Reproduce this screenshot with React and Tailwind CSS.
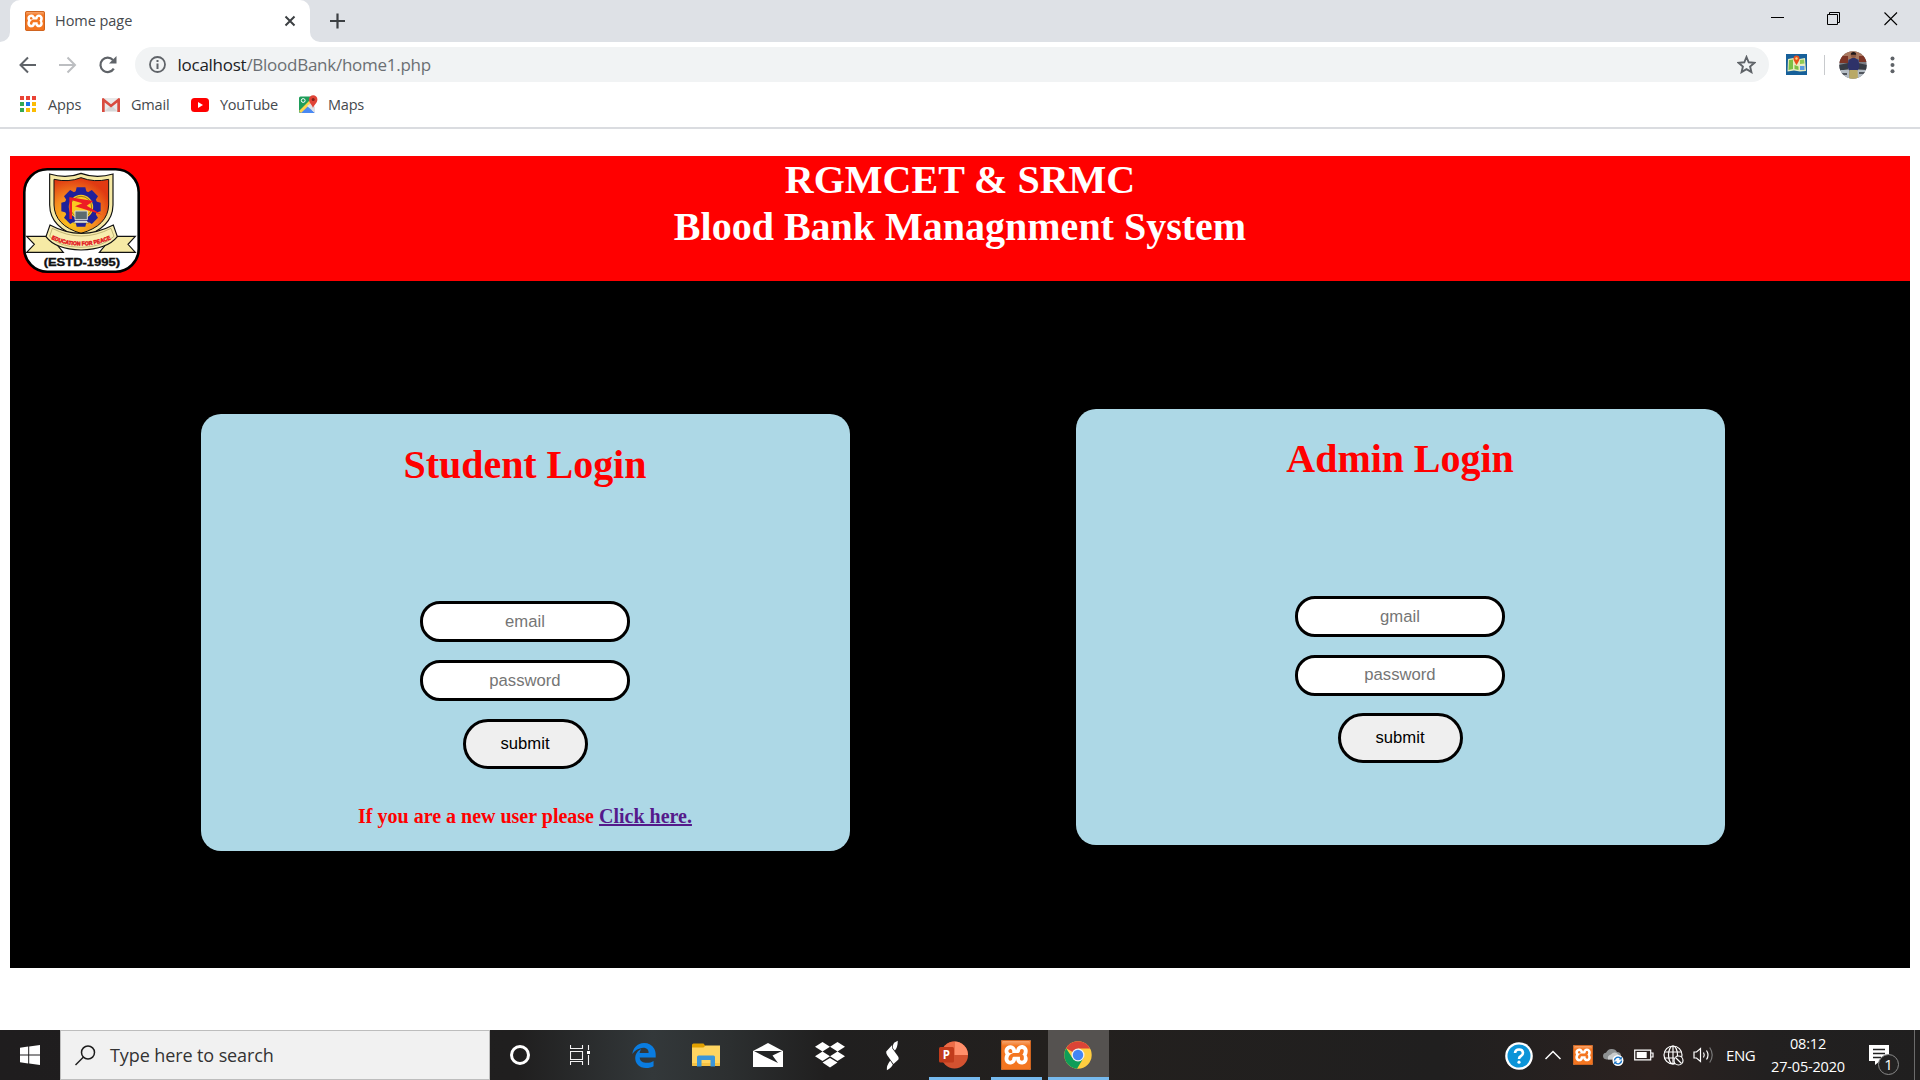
import { SiXampp } from "react-icons/si";
import { FaEdgeLegacy } from "react-icons/fa";

const UI = "font-['Open_Sans','Noto_Sans',sans-serif]";

function Xampp({ className }) {
  return (
    <span className={`relative block shrink-0 overflow-hidden rounded-[2px] bg-white ${className}`}>
      <SiXampp className="block h-full w-full scale-[1.06] text-[#f47621]" />
      <span className="absolute inset-0 rounded-[2px] border border-[#cf6420] bg-[linear-gradient(180deg,rgba(255,255,255,.35),transparent_18%)]" />
    </span>
  );
}

function TabStrip() {
  return (
    <div className="flex h-[42px] items-start bg-[#dee1e6]">
      <svg className="mt-[32px] h-[10px] w-[10px]" viewBox="0 0 10 10"><path d="M10 0v10H0A10 10 0 0 0 10 0z" fill="#fff" /></svg>
      <div className="flex h-[42px] w-[300px] items-center rounded-t-[10px] bg-white pl-[15px]">
        <Xampp className="h-5 w-5" />
        <span className="ml-[10px] w-[229px] text-[14.5px] leading-5 tracking-[-0.05px] text-[#45494d]">Home page</span>
        <svg className="h-3 w-3 shrink-0" viewBox="0 0 12 12"><path d="M1.500 1.500l9 9M10.500 1.500l-9 9" stroke="#3c4043" strokeWidth="2" /></svg>
      </div>
      <svg className="mt-[32px] h-[10px] w-[10px]" viewBox="0 0 10 10"><path d="M0 0v10h10A10 10 0 0 1 0 0z" fill="#fff" /></svg>
      <svg className="ml-[9px] mt-[13px] h-4 w-4" viewBox="0 0 16 16"><path d="M8.500 .5v15M1 8h15" stroke="#3c4043" strokeWidth="2.200" /></svg>
      <div className="ml-auto flex pt-3">
        <svg className="h-[14px] w-[14px]" viewBox="0 0 14 14"><path d="M0 5.500h13" stroke="#000" /></svg>
        <svg className="ml-[42px] h-[14px] w-[14px]" viewBox="0 0 14 14" fill="none" stroke="#000"><path d="M.5 2.500h10v10H.5zM2.500 2V.5h10v10H11" /></svg>
        <svg className="ml-[43px] mr-[22px] h-[14px] w-[14px]" viewBox="0 0 14 14"><path d="M.5 .5l12.500 12.500M13 .5L.5 13" stroke="#000" strokeWidth="1.100" /></svg>
      </div>
    </div>
  );
}

function Toolbar() {
  return (
    <div className="flex h-[45px] items-center">
      <svg className="ml-[19px] h-[18px] w-[18px]" viewBox="0 0 18 18" fill="none" stroke="#5f6368" strokeWidth="2"><path d="M17 9H2M9 1.500L1.500 9 9 16.500" /></svg>
      <svg className="ml-[22px] h-[18px] w-[18px]" viewBox="0 0 18 18" fill="none" stroke="#bcbec1" strokeWidth="2"><path d="M0 9h15.500M8.500 1.500L16 9l-7.500 7.500" /></svg>
      <svg className="ml-[22px] h-[18px] w-[18px]" viewBox="0 0 18 18"><path d="M14.800 12.600A7.200 7.200 0 1 1 14 4" fill="none" stroke="#5f6368" strokeWidth="2.200" /><path d="M17.500 0v7.500H10z" fill="#5f6368" /></svg>
      <div className="ml-[18px] flex h-[35px] w-[1634px] items-center rounded-full bg-[#f1f3f4] pl-[14px]">
        <svg className="h-[17px] w-[17px]" viewBox="0 0 17 17"><circle cx="8.500" cy="8.500" r="7.500" fill="none" stroke="#5f6368" strokeWidth="1.800" /><path d="M7.500 7.500h2V13h-2zM7.500 4h2v2h-2z" fill="#5f6368" /></svg>
        <span className="ml-[11.500px] text-[17px] leading-6 tracking-[-0.26px] text-[#6b6f73]"><span className="text-[#202124]">localhost</span>/BloodBank/home1.php</span>
        <svg className="ml-auto mr-[13px] h-[19px] w-[19px]" viewBox="0 0 19 19" fill="none" stroke="#5f6368" strokeWidth="1.900"><path d="M9.500 2l2.200 5.300 5.700.5-4.300 3.700 1.300 5.600-4.900-3-4.900 3 1.300-5.600L1.600 7.800l5.700-.5z" /></svg>
      </div>
      <svg className="ml-[17px] h-[21px] w-[21px]" viewBox="0 0 21 21">
        <path d="M0 0h21v21H0z" fill="#17609a" />
        <path d="M2 5l5.500-1 6 1L19 4l1 13-6 .5-6-1-6.500 1z" fill="#e8ecc0" />
        <path d="M3 6l4-.5V15l-4.500 1zM8.500 11l4 1.500V16l-4-1z" fill="#7cc047" />
        <path d="M14 6l4-.5.5 4-4.500.5z" fill="#8fcb54" /><path d="M14 12h4.500v4H14z" fill="#5a9be0" />
        <path d="M10.500 11C8 7 7.500 6 7.500 4.500a3 3 0 0 1 6 0c0 1.500-.5 2.500-3 6.500z" fill="#e8501c" /><circle cx="10.500" cy="4.500" r="1.200" fill="#ffd27a" />
      </svg>
      <div className="ml-[17px] h-5 w-px bg-[#c8cacd]" />
      <svg className="ml-[14px] h-[28px] w-[28px]" viewBox="0 0 28 28">
        <clipPath id="av"><circle cx="14" cy="14" r="13.700" /></clipPath>
        <g clipPath="url(#av)">
          <path d="M0 0h28v28H0z" fill="#7c7d84" /><path d="M0 0h28v8H0z" fill="#a9785f" /><path d="M0 5h9v7H0zM20 5h8v6h-8z" fill="#7d3526" />
          <path d="M0 14l9-2v6l-9 2zM19 12l9 2v5l-9-1z" fill="#373b43" /><path d="M0 19h10v9H0zM18 19h10v9H18z" fill="#b4bcc4" /><path d="M2 22h6v2H2zM20 21h6v2h-6z" fill="#50555d" />
          <path d="M9.500 9l3.500-2h3l3.500 2 1 7-2 3.500h-8l-2-3.500z" fill="#2e3269" /><circle cx="14.500" cy="4.300" r="2.600" fill="#8d5a44" /><path d="M11.800 3.800a2.700 2.700 0 0 1 5.400 0z" fill="#20191b" />
          <path d="M10.500 19h8l.5 9h-9z" fill="#b9a967" />
        </g>
      </svg>
      <svg className="ml-[23px] h-[18px] w-[6px]" viewBox="0 0 6 18" fill="#5f6368"><circle cx="2.500" cy="2.500" r="2" /><circle cx="2.500" cy="9" r="2" /><circle cx="2.500" cy="15.300" r="2" /></svg>
    </div>
  );
}

const APP_DOTS = ["#ea4335", "#ea4335", "#ea4335", "#34a853", "#1a73e8", "#fbbc04", "#34a853", "#fbbc04", "#fbbc04"];

function Bookmarks() {
  const label = "text-[14.5px] leading-5 text-[#45494d]";
  return (
    <div className="flex h-[40px] items-start pt-[8px]">
      <div className="ml-5 mt-[1px] grid h-[16px] w-[16px] grid-cols-3 gap-[2px]">
        {APP_DOTS.map((c, i) => <span key={i} className="h-1 w-1" style={{ background: c }} />)}
      </div>
      <span className={`ml-[12px] w-[54px] tracking-[-0.15px] ${label}`}>Apps</span>
      <svg className="mt-[3px] h-[14px] w-[18px]" viewBox="0 0 18 14"><path d="M1 0h16v14H1z" fill="#e9e9e9" /><path d="M3 13l6-6 6 6z" fill="#d6d6d6" /><path d="M0 1.200C0 .4.600 0 1.300 0L9 6.200 16.700 0c.7 0 1.300.4 1.300 1.200V14h-2.700V4.500L9 9.400 2.700 4.500V14H0z" fill="#d94b3f" /></svg>
      <span className={`ml-[11px] w-[60px] tracking-[-0.2px] ${label}`}>Gmail</span>
      <svg className="mt-[3px] h-[14px] w-[18px]" viewBox="0 0 18 14"><rect width="18" height="14" rx="3.500" fill="#f00" /><path d="M7 4l5 3-5 3z" fill="#fff" /></svg>
      <span className={`ml-[11px] w-[79px] tracking-[-0.25px] ${label}`}>YouTube</span>
      <svg className="h-[19px] w-[19px]" viewBox="0 0 19 19">
        <path d="M0 3q0-1.500 1.500-1.500H13V18H1.500Q0 18 0 16.500z" fill="#1f9d5a" /><path d="M1 18L8 10.500l8 7.500z" fill="#4a89f3" /><path d="M0 16L12 4l2.500 2L2 18z" fill="#ffd44a" /><path d="M8 11l4-3 4 4v6z" fill="#dfe1e5" /><circle cx="4.200" cy="5.500" r="1.900" fill="none" stroke="#fff" />
        <path d="M14 13c-.5-3-4-5-4-8.500a4.200 4.200 0 0 1 8.400 0C18.400 8 14.700 10 14 13z" fill="#e04336" /><circle cx="14.200" cy="4.500" r="1.500" fill="#84211a" />
      </svg>
      <span className={`ml-[10px] tracking-[-0.2px] ${label}`}>Maps</span>
    </div>
  );
}

const GEAR_TEETH = [0, 45, 90, 135, 180, 225, 270, 315];

function Crest() {
  return (
    <svg className="h-full w-full" viewBox="0 0 117 105">
      <defs>
        <radialGradient id="sh" cx=".35" cy=".75" r=".75"><stop offset="0" stopColor="#fbd21c" /><stop offset=".55" stopColor="#f58a1f" /><stop offset="1" stopColor="#e03a12" /></radialGradient>
        <path id="motto" d="M94 222Q183 262 276 221" />
      </defs>
      <rect x="1.300" y="1.300" width="114.400" height="102.400" rx="23" fill="#fff" stroke="#000" strokeWidth="2.600" />
      <g transform="translate(-3 -3) scale(.33333)">
        <path d="M89 27Q140 42 183 25Q228 42 279 27V120Q278 190 183 217Q90 190 89 120z" fill="#f6e9a4" stroke="#111" strokeWidth="3.500" />
        <path d="M102 43Q146 53 183 38Q222 53 266 43V120Q264 182 183 205Q104 182 102 120z" fill="url(#sh)" stroke="#111" strokeWidth="3" />
        {GEAR_TEETH.map((a) => <path key={a} d="M170 67h26l4 16h-34z" fill="#20209a" transform={`rotate(${a} 183 126)`} />)}
        <circle cx="183" cy="126" r="43" fill="#fbc921" stroke="#20209a" strokeWidth="13" />
        <circle cx="183" cy="126" r="32" fill="none" stroke="#6b5310" strokeWidth="2" />
        <path d="M151 97L220 108 200 122 246 149 165 124 187 115 156 106V162H148V97z" fill="#ed1c24" />
        <path d="M165 138h37v26h-37z" fill="#5b6b70" stroke="#d9dcda" strokeWidth="3" /><path d="M160 174l6-7h34l7 7z" fill="#e5e5e5" stroke="#555" strokeWidth="1.500" />
        <path d="M20 214H90L130 262H20L43 238zM346 214H278L238 262H346L324 238z" fill="#f6eaa5" stroke="#111" strokeWidth="3.500" />
        <path d="M90 180Q183 230 280 180L292 215Q262 253 183 255Q106 253 78 215z" fill="#f8edae" stroke="#111" strokeWidth="3.500" />
        <path d="M97 190Q183 236 273 190L282 214Q250 246 183 247Q116 246 89 214z" fill="none" stroke="#8a7b3a" strokeWidth="1.500" />
        <text fill="#e31b23" stroke="#e31b23" strokeWidth="1.500" fontSize="17" fontWeight="700" fontFamily="Liberation Sans, sans-serif"><textPath href="#motto" textLength="184" lengthAdjust="spacingAndGlyphs">EDUCATION FOR PEACE</textPath></text>
        <text x="71" y="302" textLength="229" lengthAdjust="spacingAndGlyphs" fontSize="30" fontWeight="700" fontFamily="Liberation Sans, sans-serif" fill="#111" stroke="#111" strokeWidth="1">(ESTD-1995)</text>
      </g>
    </svg>
  );
}

function LoginCard({ title, field, className, titleClass, gap, children }) {
  const input = "block w-[210px] rounded-[20px] border-[3px] border-black bg-white text-center text-[16.67px] leading-5 placeholder:text-[#757575] placeholder:opacity-100 outline-none";
  return (
    <section className={`flex w-[649px] flex-col items-center rounded-[20px] bg-[#add8e6] pr-px ${className}`}>
      <h1 className={`font-['Liberation_Serif',serif] text-[40px] font-bold leading-[47px] tracking-[-0.05px] text-[#ff0000] ${titleClass}`}>{title}</h1>
      <form className={`flex flex-col items-center font-['Liberation_Sans',sans-serif] ${gap}`}>
        <input className={`h-[41px] ${input}`} placeholder={field} />
        <input className={`h-[41px] ${input}`} type="password" placeholder="password" />
        <button type="button" className="h-[50px] w-[125px] rounded-[25px] border-[3px] border-black bg-[#efefef] text-[16.67px] leading-5 text-black">submit</button>
      </form>
      {children}
    </section>
  );
}

function Page() {
  return (
    <main className="mx-[10px] mt-[27px] h-[812px] bg-black">
      <header className="flex h-[125px] bg-[#ff0000]">
        <div className="ml-[13px] mt-3 h-[105px] w-[117px]"><Crest /></div>
        <h1 className="mr-[130px] grow text-center font-['Liberation_Serif',serif] text-[40px] font-bold leading-[47px] text-white">RGMCET &amp; SRMC<br />Blood Bank Managnment System</h1>
      </header>
      <div className="flex items-start">
        <LoginCard title="Student Login" field="email" className="ml-[191px] mt-[133px] h-[437px]" titleClass="mt-[27px]" gap="mt-[113px] gap-[18px]">
          <p className="mt-[35px] font-['Liberation_Serif',serif] text-[20px] font-bold leading-6 text-[#ff0000]">If you are a new user please <a className="text-[#551a8b] underline" href="#register">Click here.</a></p>
        </LoginCard>
        <LoginCard title="Admin Login" field="gmail" className="ml-[226px] mt-[128px] h-[436px]" titleClass="mt-[26px]" gap="mt-[114px] gap-[17.5px]" />
      </div>
    </main>
  );
}

function Slot({ children, className = "w-[62px]", bar }) {
  return (
    <div className={`relative flex h-full shrink-0 items-center justify-center ${className}`}>
      {children}
      {bar && <span className={`absolute bottom-0 h-[3px] bg-[#76b9ed] ${bar}`} />}
    </div>
  );
}

function Taskbar() {
  return (
    <footer className="mt-auto flex h-[50px] items-center bg-[linear-gradient(90deg,#1f1d1e_0%,#201f1f_27%,#33383a_34%,#2c2f30_38%,#201f1f_43%,#23201e_55%,#201f1f_75%,#2b2220_86%,#222020_92%,#201f1f_100%)]">
      <Slot className="w-[60px]">
        <svg className="h-5 w-5" viewBox="0 0 20 20" fill="#fff"><path d="M0 2.800L8.200 1.600V9.500H0zM9.200 1.500L20 0v9.500H9.200zM0 10.500h8.200v8L0 17.300zM9.200 10.500H20V20L9.200 18.600z" /></svg>
      </Slot>
      <div className="flex h-full w-[430px] shrink-0 items-center border border-[#bdbdbd] bg-[#f1f1f1] pl-[14px]">
        <svg className="h-[21px] w-[21px]" viewBox="0 0 21 21" fill="none" stroke="#1c1c1c" strokeWidth="1.500"><circle cx="13" cy="7.500" r="6.500" /><path d="M8.500 12L.5 20" /></svg>
        <span className="ml-[14px] text-[18px] leading-6 tracking-[-0.1px] text-[#333]">Type here to search</span>
      </div>
      <Slot className="w-[60px]"><span className="h-5 w-5 rounded-full border-[3px] border-white" /></Slot>
      <Slot className="mr-[3px] w-[60px]">
        <svg className="h-5 w-5" viewBox="0 0 20 20" fill="none" stroke="#f3f3f3"><path d="M.5 0v3.500h12V0M.5 20v-3.500h12V20M.5 6.500h12v8H.5zM18.500 0v5M18.500 10v10" strokeWidth="1.100" /><path d="M17 6h3v3h-3z" fill="#fff" stroke="none" /></svg>
      </Slot>
      <Slot><FaEdgeLegacy className="h-[27px] w-[26px] text-[#0a7ce0]" /></Slot>
      <Slot>
        <svg className="h-6 w-7" viewBox="0 0 28 24"><path d="M0 2q0-1.500 1.500-1.500h10L13.500 3 12 5H0z" fill="#e2a100" /><path d="M0 4.500h11.500l2-2H28V22q0 1-1 1H1q-1 0-1-1z" fill="#ffd561" /><path d="M0 20h28v2q0 1-1 1H1q-1 0-1-1z" fill="#f5c243" /><path d="M5 23.500V14q0-1.500 1.500-1.500h15Q23 12.500 23 14v9.500h-4.500V17h-9v6.500z" fill="#3b96da" /></svg>
      </Slot>
      <Slot>
        <svg className="h-6 w-[30px]" viewBox="0 0 30 24"><path d="M0 8L15 0l15 8v16H0z" fill="#fff" /><path d="M1 8h28L19.500 12.500 25 20 11.500 13.500z" fill="#222425" /></svg>
      </Slot>
      <Slot>
        <svg className="h-[26px] w-[30px]" viewBox="0 0 30 26" fill="#fff"><path d="M7.500 0L15 4.800 7.500 9.500 0 4.800zM22.500 0L30 4.800l-7.500 4.700L15 4.800zM0 14.300l7.500-4.700 7.500 4.700L7.500 19zM30 14.300l-7.500-4.700-7.500 4.700 7.500 4.700zM7.500 20.600L15 15.900l7.500 4.700-7.500 4.800z" /></svg>
      </Slot>
      <Slot>
        <svg className="h-[31px] w-[15px]" viewBox="43 28 44 94" fill="#fff"><path d="M81 30L70 36Q65 42 66 52L72 60Q81 50 81 30z" /><path d="M64 43L46 63Q45 68 49 74L68 101 83 87Q85 83 82 78L64 53z" /><path d="M48 120Q46 106 58 91L66 102Q64 110 48 120z" /></svg>
      </Slot>
      <Slot bar="w-[51px]">
        <svg className="mr-px h-7 w-[29px]" viewBox="0 0 29 28"><circle cx="15.500" cy="14" r="13.500" fill="#d35230" /><path d="M15.500.5A13.500 13.500 0 0 1 29 14H15.500z" fill="#ff8f6b" /><path d="M15.500.5V14H2A13.500 13.500 0 0 1 15.500.5z" fill="#ed6c47" /><rect y="6" width="15" height="15.500" rx="1.500" fill="#c13b1b" /><text x="3.700" y="18" fontSize="11.500" fontWeight="700" fontFamily="Open Sans, sans-serif" fill="#fff">P</text></svg>
      </Slot>
      <Slot bar="w-[51px]"><Xampp className="h-[30px] w-[30px]" /></Slot>
      <Slot className="ml-px w-[61px] bg-[#555250]" bar="w-[61px]">
        <svg className="mr-px h-7 w-7" viewBox="0 0 28 28"><circle cx="14" cy="14" r="13.700" fill="#ffcd40" /><path d="M14 14L2.100 7.200A13.700 13.700 0 0 1 25.900 7.200L26 7.500H14z" fill="#db4437" /><path d="M2.100 7.200A13.700 13.700 0 0 0 13 27.700l6.300-10.500L14 14 8.400 17z" fill="#0f9d58" /><circle cx="14" cy="14" r="6.500" fill="#f1f1f1" /><circle cx="14" cy="14" r="5.200" fill="#4285f4" /></svg>
      </Slot>
      <div className="ml-auto flex h-full items-center text-white">
        <svg className="mt-[2px] h-7 w-7" viewBox="0 0 28 28"><circle cx="14" cy="14" r="13.800" fill="#fff" /><circle cx="14" cy="14" r="11.500" fill="#0c94d8" /><path d="M10 11Q10.300 7.500 14 7.500t4 3.300Q18 13 16 14t-2 3" fill="none" stroke="#fff" strokeWidth="2.600" /><circle cx="14" cy="20.200" r="1.600" fill="#fff" /></svg>
        <svg className="ml-[12px] h-[10px] w-4" viewBox="0 0 16 10" fill="none" stroke="#fff" strokeWidth="1.500"><path d="M.5 9L8 1.500 15.500 9" /></svg>
        <Xampp className="ml-3 h-5 w-5" />
        <svg className="ml-[10px] mt-1 h-[18px] w-[21px]" viewBox="0 0 21 18"><path d="M3.500 11.500Q0 11 0 8q0-3 3-3.200Q5 .5 9 1q3.500 0 5 3 4 0 4 4v3.500z" fill="#8e9192" /><path d="M5 11.500q-1-4 3-5Q11 3 15 6l4 5.500z" fill="#c9cccd" /><circle cx="15" cy="12.500" r="5.500" fill="#fff" /><path d="M11.500 12.500a3.500 3.500 0 0 1 6-2.300M18.500 12.500a3.500 3.500 0 0 1-6 2.300" fill="none" stroke="#0f6fc5" strokeWidth="1.400" /><path d="M18.800 8.500v3h-3zM11.200 16.500v-3h3z" fill="#0f6fc5" /></svg>
        <svg className="ml-[10px] h-3 w-[20px]" viewBox="0 0 20 12"><path d="M.7 1.200h16v9.600h-16zM17 4h2v4h-2" fill="none" stroke="#fff" strokeWidth="1.200" /><path d="M2.700 3h10v6h-10z" fill="#fff" /></svg>
        <svg className="ml-[9px] h-[21px] w-[21px]" viewBox="0 0 21 21" fill="none" stroke="#fff" strokeWidth="1.200"><circle cx="10" cy="10" r="9" /><ellipse cx="10" cy="10" rx="4.500" ry="9" /><path d="M1.500 7h17M1.500 13H11M10 1v18" /><circle cx="15.500" cy="15.500" r="4.500" fill="#241f1e" /><path d="M12.500 12.500l6 6" /></svg>
        <svg className="ml-[9px] h-[18px] w-[21px]" viewBox="0 0 21 18" fill="none" stroke="#fff" strokeWidth="1.200"><path d="M1 6h2.500l4-3.500v13L3.500 12H1z" /><path d="M10.500 6.500q1.500 2.500 0 5M13.500 4.500q3 4.500 0 9" /><path d="M16.700 1.500q5 7.500 0 15" stroke="#777" /></svg>
        <span className="ml-[12px] w-[30px] whitespace-nowrap text-[15px] tracking-[-0.4px]">ENG</span>
        <div className="ml-[12px] flex w-[80px] flex-col items-center whitespace-nowrap text-[14.5px] leading-[23px] tracking-[-0.18px]"><span>08:12</span><span>27-05-2020</span></div>
        <div className="relative ml-[21px] mr-[25px] h-5 w-5">
          <svg className="h-5 w-5" viewBox="0 0 20 20"><path d="M0 0h20v16h-9l-5 4v-4H0z" fill="#fff" /><path d="M4 4.500h12M4 8.500h12M4 12.500h8" stroke="#222" strokeWidth="1.300" /></svg>
          <span className="absolute left-[9px] top-[9px] flex h-[21px] w-[21px] items-center justify-center rounded-full border border-[#8a8a8a] bg-[#232222] text-[15px] leading-none">1</span>
        </div>
        <span className="mr-[5px] h-full w-px bg-[#6b6b6b]" />
      </div>
    </footer>
  );
}

export default function App() {
  return (
    <div className={`flex h-[1080px] w-[1920px] flex-col overflow-hidden bg-white ${UI}`}>
      <div className="h-[129px] shrink-0 border-b-2 border-[#dadce0]">
        <TabStrip />
        <Toolbar />
        <Bookmarks />
      </div>
      <Page />
      <Taskbar />
    </div>
  );
}
